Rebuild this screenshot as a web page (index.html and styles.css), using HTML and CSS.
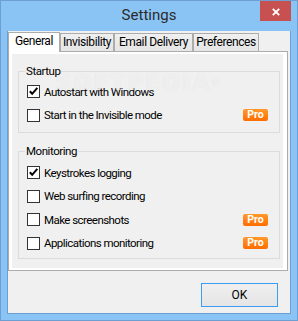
FILE: index.html
```html
<!DOCTYPE html>
<html>
<head>
<meta charset="utf-8">
<link rel="stylesheet" href="styles.css">
</head>
<body>
<div class="window">
  <div class="titlebar">
    <span class="title">Settings</span>
    <button class="close" aria-label="Close">
      <svg width="8" height="8" viewBox="0 0 8 8"><path d="M0.8 0.8L7.2 7.2M7.2 0.8L0.8 7.2" stroke="#fff" stroke-width="1.9" fill="none"/></svg>
    </button>
  </div>
  <div class="client">
    <div class="tabs">
      <div class="tab selected t-general">General</div>
      <div class="tab t-invis">Invisibility</div>
      <div class="tab t-email">Email Delivery</div>
      <div class="tab t-prefs">Preferences</div>
    </div>
    <div class="panel">
      <div class="page">
        <fieldset class="group startup">
          <legend>Startup</legend>
          <div class="row"><span class="cb"><svg width="11" height="11" viewBox="0 0 11 11"><path d="M1.8 5.2L4.2 7.8L9.3 1.9" stroke="#000" stroke-width="2" fill="none"/></svg></span><span class="label">Autostart with Windows</span></div>
          <div class="row"><span class="cb"></span><span class="label">Start in the Invisible mode</span><span class="pro">Pro</span></div>
        </fieldset>
        <fieldset class="group monitoring">
          <legend>Monitoring</legend>
          <div class="row"><span class="cb"><svg width="11" height="11" viewBox="0 0 11 11"><path d="M1.8 5.2L4.2 7.8L9.3 1.9" stroke="#000" stroke-width="2" fill="none"/></svg></span><span class="label">Keystrokes logging</span></div>
          <div class="row"><span class="cb"></span><span class="label">Web surfing recording</span></div>
          <div class="row"><span class="cb"></span><span class="label">Make screenshots</span><span class="pro">Pro</span></div>
          <div class="row"><span class="cb"></span><span class="label">Applications monitoring</span><span class="pro">Pro</span></div>
        </fieldset>
      </div>
      <div class="watermark">SOFTPEDIA<span class="reg">®</span></div>
    </div>
    <div class="footer">
      <button class="ok">OK</button>
    </div>
  </div>
</div>
</body>
</html>
```
FILE: styles.css
```css
* { box-sizing: border-box; }
html, body { margin: 0; padding: 0; }
body {
  font-family: Roboto, "Liberation Sans", sans-serif;
  font-size: 12px;
  color: #000;
  background: #8ac4f5;
}
.window {
  width: 298px;
  height: 321px;
  background: #8ac4f5;
  border: 1px solid #6d9fd3;
  padding: 0 6px 6px;
  display: flex;
  flex-direction: column;
}
.titlebar {
  height: 30px;
  flex: none;
  display: grid;
  grid-template-columns: 1fr auto 1fr;
  align-items: start;
}
.title {
  grid-column: 2;
  font-size: 15px;
  line-height: 20px;
  margin-top: 4px;
  color: #2b2b2b;
}
.close {
  grid-column: 3;
  justify-self: end;
  width: 31px;
  height: 20px;
  border: 0;
  padding: 0;
  margin: 0;
  background: #c75050;
  display: flex;
  align-items: center;
  justify-content: center;
}
.close svg { display: block; margin-top: 1px; }
.client {
  flex: 1;
  background: #f0f0f0;
  border: 1px solid #6d9fd3;
  border-top: 0;
  display: flex;
  flex-direction: column;
}
.tabs {
  display: flex;
  align-items: flex-end;
  height: 19px;
  margin-top: 1px;
  flex: none;
}
.tab {
  height: 18px;
  border: 1px solid #acacac;
  border-bottom: 0;
  background: linear-gradient(#f0f0f0, #e5e5e5);
  text-align: center;
  line-height: 16px;
  white-space: nowrap;
  letter-spacing: -0.4px;
}
.tab.selected {
  height: 20px;
  margin-bottom: -1px;
  background: #fff;
  position: relative;
  z-index: 1;
}
.t-general { width: 52px; }
.t-invis { width: 54px; }
.t-email { width: 79px; }
.t-prefs { width: 66px; }
.panel {
  height: 220px;
  flex: none;
  margin-right: 2px;
  border: 1px solid #acacac;
  background: #fff;
  padding: 2px 4px 2px 3px;
  position: relative;
  display: flex;
  flex-direction: column;
}
.page {
  flex: 1;
  background: #f0f0f0;
  padding-top: 10px;
}
.group {
  border: 1px solid #dcdcdc;
  margin: 0 3px 0 6px;
  padding: 2px 11px 5px 8px;
  min-width: 0;
}
.group legend {
  padding: 0 1px;
  margin-left: -2px;
  line-height: 14px;
  font-size: 11.5px;
  letter-spacing: -0.45px;
}
.monitoring {
  margin-top: 11px;
  padding-top: 3px;
  padding-bottom: 3px;
}
.row {
  height: 23.5px;
  display: flex;
  align-items: center;
}
.cb {
  width: 13px;
  height: 13px;
  flex: none;
  border: 1px solid #333;
  background: #fff;
  margin-right: 4px;
}
.cb svg { display: block; }
.label {
  font-size: 11.5px;
  letter-spacing: -0.55px;
  white-space: nowrap;
}
.pro {
  margin-left: auto;
  width: 25px;
  height: 12px;
  flex: none;
  border-radius: 2px;
  background: linear-gradient(#ff9a2a, #ff6c00);
  color: #fff;
  font-weight: bold;
  font-size: 10.5px;
  line-height: 12px;
  text-align: center;
}
.watermark {
  position: absolute;
  left: 47px;
  top: 24px;
  font-family: "DejaVu Sans", sans-serif;
  font-weight: bold;
  font-size: 21px;
  line-height: 15px;
  letter-spacing: 2.5px;
  color: rgba(255, 255, 255, 0.55);
  text-shadow: 0 0 1px rgba(200, 200, 200, 0.5);
  pointer-events: none;
}
.watermark .reg {
  font-size: 9px;
  vertical-align: top;
  letter-spacing: 0;
}
.footer {
  display: flex;
  justify-content: flex-end;
  padding: 12px 12px 0 0;
}
.ok {
  width: 77px;
  height: 24px;
  margin: 0;
  padding: 0;
  border: 1px solid #3c9cf0;
  background: linear-gradient(#efefef, #e5e5e5);
  font-family: Roboto, "Liberation Sans", sans-serif;
  font-size: 12px;
  color: #000;
}
```
